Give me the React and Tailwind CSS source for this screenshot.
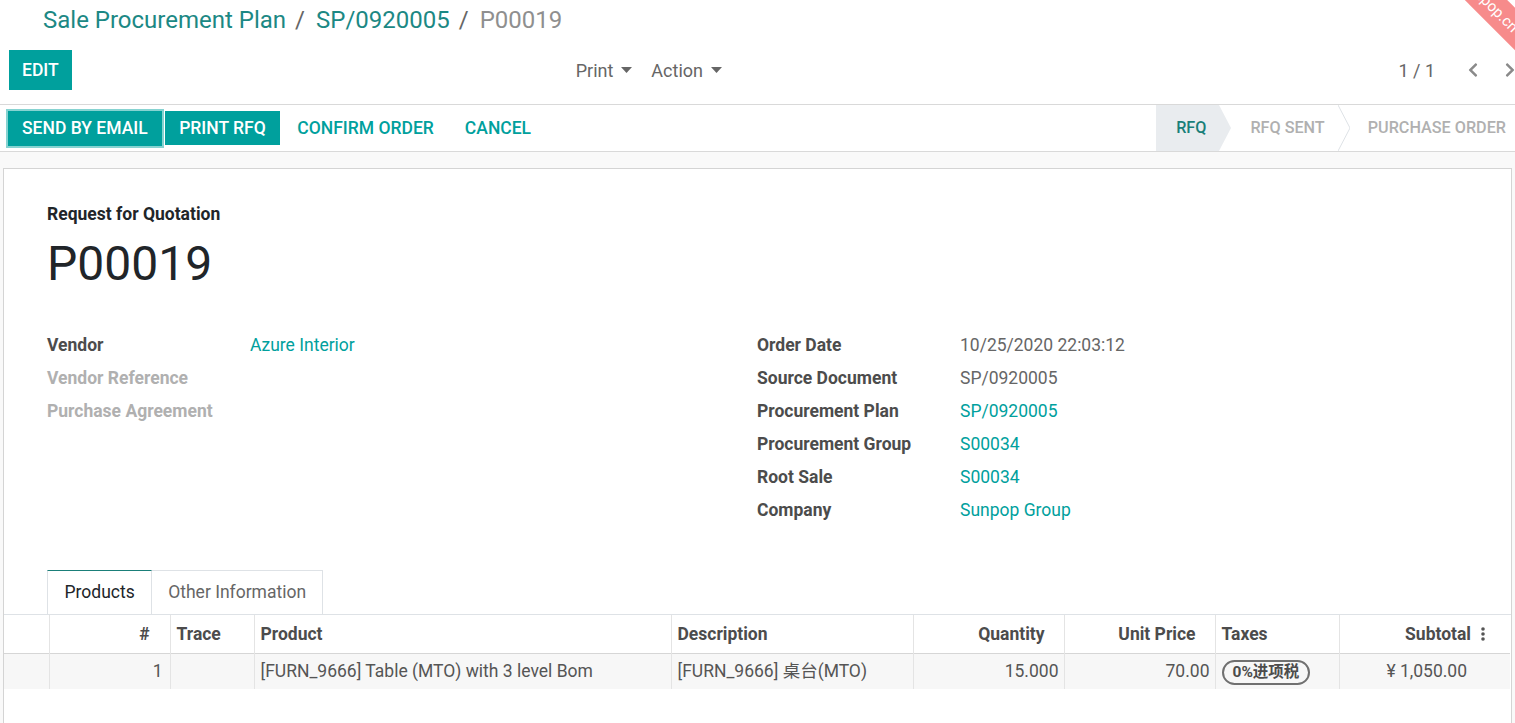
import React from 'react';
import { FaChevronLeft, FaChevronRight } from 'react-icons/fa';

const Caret = () => (
  <svg width="11" height="6" viewBox="0 0 11 6" className="ml-2 fill-current">
    <polygon points="0,0 11,0 5.5,6" />
  </svg>
);

const leftFields = [
  { label: 'Vendor', value: 'Azure Interior', link: true },
  { label: 'Vendor Reference', empty: true },
  { label: 'Purchase Agreement', empty: true },
];

const rightFields = [
  { label: 'Order Date', value: '10/25/2020 22:03:12' },
  { label: 'Source Document', value: 'SP/0920005' },
  { label: 'Procurement Plan', value: 'SP/0920005', link: true },
  { label: 'Procurement Group', value: 'S00034', link: true },
  { label: 'Root Sale', value: 'S00034', link: true },
  { label: 'Company', value: 'Sunpop Group', link: true },
];

const FieldRow = ({ label, value, link, empty }) => (
  <div className="flex h-[33px] items-center">
    <div className={`w-[203px] shrink-0 font-bold ${empty ? 'text-[#b0b0b0]' : 'text-[#4c4c4c]'}`}>{label}</div>
    {value && <div className={link ? 'text-[#00a09d]' : 'text-[#666666]'}>{value}</div>}
  </div>
);

const App = () => {
  return (
    <div className="relative h-[723px] w-full overflow-hidden bg-[#f9f9f9] font-[Roboto,'Noto_Sans_CJK_SC',sans-serif] text-[17.5px] text-[#4c4c4c]">
      {/* Control panel */}
      <div className="bg-white">
        <div className="flex h-[40px] items-center pl-[43px] text-[24px]">
          <span className="text-[#1c8884]">Sale Procurement Plan</span>
          <span className="pl-[9px] pr-[11px] text-[#666666]">/</span>
          <span className="text-[#1c8884]">SP/0920005</span>
          <span className="pl-[9px] pr-[11px] text-[#666666]">/</span>
          <span className="text-[#8f8f8f]">P00019</span>
        </div>

        <div className="flex items-center border-b border-[#d9d9d9] pb-[14px] pl-[9px] pt-[10px]">
          <button className="h-[40px] bg-[#00a09d] px-[13px] font-medium text-white">EDIT</button>
          <div className="ml-[504px] flex items-center text-[18px] text-[#666666]">
            <span className="flex items-center">Print<Caret /></span>
            <span className="ml-[19px] flex items-center">Action<Caret /></span>
          </div>
          <div className="ml-auto mr-[-3px] flex items-center text-[18px] text-[#666666]">
            <span>1 / 1</span>
            <FaChevronLeft className="ml-[30px] text-[#8a8a8a]" size={16} />
            <FaChevronRight className="ml-[21px] text-[#8a8a8a]" size={16} />
          </div>
        </div>

        {/* Status bar */}
        <div className="flex h-[47px] items-center border-b border-[#d9d9d9] pl-2">
          <button className="h-[35px] bg-[#00a09d] px-[14px] font-medium text-white ring-2 ring-[#86d3d1]">SEND BY EMAIL</button>
          <button className="ml-[3px] h-[34px] bg-[#00a09d] px-[14.5px] font-medium text-white">PRINT RFQ</button>
          <button className="ml-[4px] h-[34px] px-[13px] font-medium text-[#00a09d]">CONFIRM ORDER</button>
          <button className="ml-[5px] h-[34px] px-[13px] font-medium text-[#00a09d]">CANCEL</button>

          <div className="ml-auto flex h-full items-stretch text-[16.2px] font-medium">
            <div className="flex items-center bg-[#e9ecef] pl-[20px] pr-[13px] text-[#1a7f79]">RFQ</div>
            <svg width="12" height="46" viewBox="0 0 12 46" className="shrink-0">
              <polygon points="0,0 12,23 0,46" fill="#e9ecef" />
            </svg>
            <div className="flex items-center pl-[19px] pr-[13px] text-[#b0b0b0]">RFQ SENT</div>
            <svg width="12" height="46" viewBox="0 0 12 46" className="shrink-0">
              <polyline points="0,0 12,23 0,46" fill="none" stroke="#dee2e6" strokeWidth="1" />
            </svg>
            <div className="flex items-center pl-[18px] pr-[9px] text-[#b0b0b0]">PURCHASE ORDER</div>
          </div>
        </div>
      </div>

      {/* Form sheet */}
      <div className="ml-[3px] mr-[3px] mt-[16px] border border-[#d4d4d4] bg-white pb-[60px]">
        <div className="pl-[43px] pt-[33px]">
          <div className="leading-[24px] font-bold text-[#212529]">Request for Quotation</div>
          <div className="mt-[10px] text-[48px] leading-[56px] text-[#212529]">P00019</div>

          <div className="mt-[37px] grid grid-cols-[710px_1fr]">
            <div>
              {leftFields.map((f) => (
                <FieldRow key={f.label} {...f} />
              ))}
            </div>
            <div>
              {rightFields.map((f) => (
                <FieldRow key={f.label} {...f} />
              ))}
            </div>
          </div>
        </div>

        {/* Notebook */}
        <div className="mt-[43px] flex border-b border-[#dee2e6] pl-[43px]">
          <div className="mb-[-1px] flex h-[44px] items-center border-x border-t border-[#dee2e6] border-t-[#1a7f79] bg-white px-[16.5px] text-[#212529]">
            Products
          </div>
          <div className="flex h-[44px] items-center border-r border-t border-[#dee2e6] px-[16px] text-[#666666]">
            Other Information
          </div>
        </div>

        <table className="w-[1506px] table-fixed border-collapse">
          <colgroup>
            <col className="w-[45px]" />
            <col className="w-[121px]" />
            <col className="w-[84px]" />
            <col className="w-[417px]" />
            <col className="w-[242px]" />
            <col className="w-[151px]" />
            <col className="w-[151px]" />
            <col className="w-[124px]" />
            <col className="w-[171px]" />
          </colgroup>
          <thead>
            <tr className="h-[38px] border-b border-[#d6d6d6] font-bold text-[#4c4c4c]">
              <th></th>
              <th className="border-l border-[#e4e4e4] pr-[20px] text-right">#</th>
              <th className="border-l border-[#e4e4e4] pl-[6px] text-left">Trace</th>
              <th className="border-l border-[#e4e4e4] pl-[6px] text-left">Product</th>
              <th className="border-l border-[#e4e4e4] pl-[6px] text-left">Description</th>
              <th className="border-l border-[#e4e4e4] pr-[19px] text-right">Quantity</th>
              <th className="border-l border-[#e4e4e4] pr-[19px] text-right">Unit Price</th>
              <th className="border-l border-[#e4e4e4] pl-[6px] text-left">Taxes</th>
              <th className="border-l border-[#e4e4e4] pr-[25px] text-right">
                <span className="inline-flex items-center">
                  Subtotal
                  <svg width="4" height="14" viewBox="0 0 4 14" className="ml-[10px] fill-[#555555]">
                    <circle cx="2" cy="2" r="1.8" />
                    <circle cx="2" cy="7" r="1.8" />
                    <circle cx="2" cy="12" r="1.8" />
                  </svg>
                </span>
              </th>
            </tr>
          </thead>
          <tbody>
            <tr className="h-[36px] bg-[#f7f7f7] text-[#555555]">
              <td></td>
              <td className="border-l border-[#e4e4e4] pr-[7px] text-right">1</td>
              <td className="border-l border-[#e4e4e4]"></td>
              <td className="border-l border-[#e4e4e4] pl-[6px]">[FURN_9666] Table (MTO) with 3 level Bom</td>
              <td className="border-l border-[#e4e4e4] pl-[6px]">[FURN_9666] 桌台(MTO)</td>
              <td className="border-l border-[#e4e4e4] pr-[5px] text-right">15.000</td>
              <td className="border-l border-[#e4e4e4] pr-[5px] text-right">70.00</td>
              <td className="border-l border-[#e4e4e4] pl-[6px]">
                <span className="inline-flex h-[25px] items-center rounded-full border-2 border-[#707070] px-[9px] text-[15.5px] font-bold text-[#4c4c4c]">
                  0%进项税
                </span>
              </td>
              <td className="border-l border-[#e4e4e4] pr-[43px] text-right">¥ 1,050.00</td>
            </tr>
          </tbody>
        </table>
      </div>

      {/* Corner ribbon */}
      <div className="pointer-events-none absolute right-0 top-0 h-[100px] w-[100px] overflow-hidden">
        <div className="absolute left-[-24px] top-[-10px] flex h-[30px] w-[200px] rotate-45 items-center justify-center bg-[#f78b8b] text-[15px] text-white">
          sunpop.cn
        </div>
      </div>
    </div>
  );
};

export default App;
